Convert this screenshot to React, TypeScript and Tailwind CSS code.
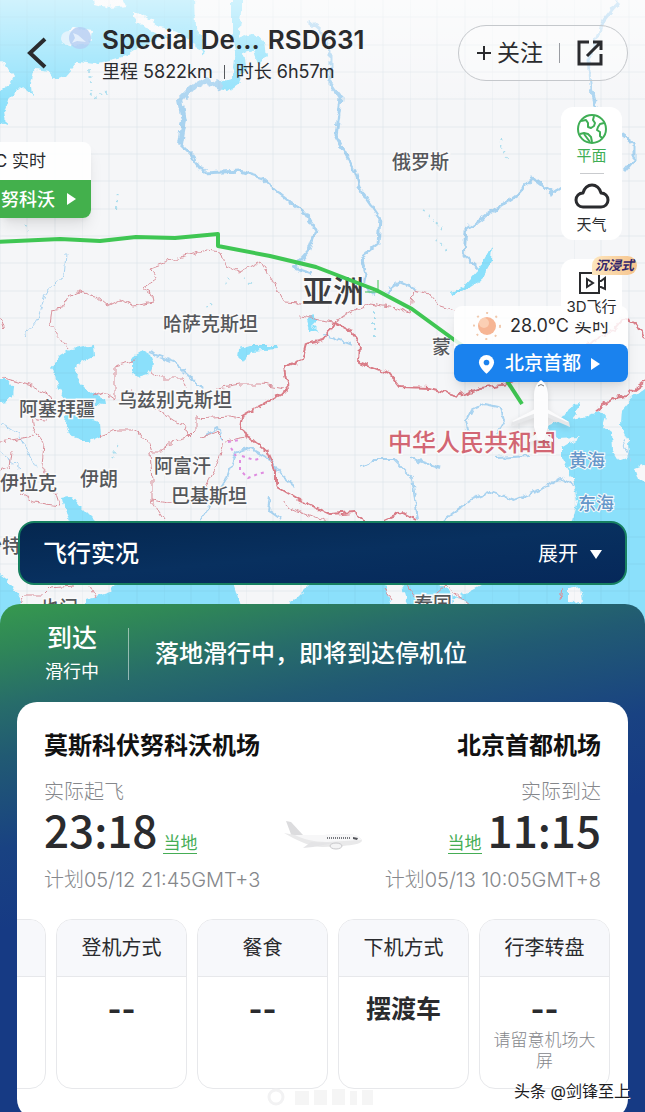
import { useState } from 'react'
import type { ReactNode } from 'react'

interface Airport {
  name: string
  kind: string
  time: string
  plan: string
}

interface ServiceCell {
  title: string
  value: string
  note?: string
}

const DEPARTURE: Airport = {
  name: '莫斯科伏努科沃机场',
  kind: '实际起飞',
  time: '23:18',
  plan: '计划05/12 21:45GMT+3',
}

const ARRIVAL: Airport = {
  name: '北京首都机场',
  kind: '实际到达',
  time: '11:15',
  plan: '计划05/13 10:05GMT+8',
}

const SERVICES: ServiceCell[] = [
  { title: '', value: '' },
  { title: '登机方式', value: '--' },
  { title: '餐食', value: '--' },
  { title: '下机方式', value: '摆渡车' },
  { title: '行李转盘', value: '--', note: '请留意机场大屏' },
]

const COUNTRIES = [
  { name: '俄罗斯', x: 392, y: 169 },
  { name: '哈萨克斯坦', x: 163, y: 331 },
  { name: '阿塞拜疆', x: 19, y: 416 },
  { name: '乌兹别克斯坦', x: 118, y: 407 },
  { name: '阿富汗', x: 154, y: 473 },
  { name: '巴基斯坦', x: 171, y: 503 },
  { name: '伊朗', x: 80, y: 486 },
  { name: '伊拉克', x: 0, y: 490 },
  { name: '沙特', x: -17, y: 553 },
  { name: '也门', x: 40, y: 615 },
  { name: '泰国', x: 414, y: 611 },
  { name: '蒙', x: 432, y: 354 },
]

function WorldMap() {
  return (
    <svg
      viewBox="0 0 645 640"
      preserveAspectRatio="xMidYMin slice"
      className="absolute inset-x-0 top-0 h-[640px] w-full"
      aria-hidden="true"
    >
      <defs>
        <filter id="rough" x="-5%" y="-5%" width="110%" height="110%" colorInterpolationFilters="sRGB">
          <feTurbulence type="fractalNoise" baseFrequency="0.14" numOctaves="2" seed="4" />
          <feDisplacementMap in="SourceGraphic" scale="7" xChannelSelector="R" yChannelSelector="G" />
        </filter>
        <pattern id="grid" width="82" height="82" patternUnits="userSpaceOnUse">
          <path d="M0 0V82M27 0V82M55 0V82M0 17H82M0 45H82M0 72H82" stroke="#5c7f99" strokeOpacity="0.09" fill="none" />
        </pattern>
        <linearGradient id="fade" x1="0" y1="0" x2="0" y2="1">
          <stop offset="0" stopColor="#fff" stopOpacity="0.6" />
          <stop offset="1" stopColor="#fff" stopOpacity="0" />
        </linearGradient>
      </defs>
      <rect width="645" height="640" fill="#f5f6f8" />

      {/* seas and lakes */}
      <g fill="#8be0fb" filter="url(#rough)">
        <path d="M-5-5H194L195 28L204 40L203 56L196 44L182 40L162 38L145 44L126 56L95 64L78 62L66 76L56 80L50 72L34 70L31 84L32 94L22 86L8 100L4 112L6 125L-5 120V94L8 86L14 76L8 66L-5 58Z" />
        <path d="M232-5H243L240 22L238 38L252 34L264 42L266 56L258 64L254 50L244 52L246 66L238 84L228 91L214 88L216 84L230 80L234 66L236 50L232 34Z" />
        <path d="M73 349L93 345L94 357L78 364L75 374L84 386L92 393L105 399L106 405L94 404L86 412L92 420L100 423L101 436L88 442L72 437L65 424L66 412L65 398L58 388L55 376L50 368L60 356Z" />
        <path d="M-5 380H8L14 388L13 396L6 402L-5 404Z" />
        <path d="M132 358L143 351L150 355L154 364L148 374L138 377L132 372Z" />
        <path d="M62 498L72 496L80 506L92 518L104 530H74L66 514Z" />
        <path d="M240 349L250 346L277 346L278 349L250 351L243 362L239 358Z" />
        <path d="M492 245L491 262L481 280L466 290L452 295L451 292L464 286L478 270L486 256Z" />
        <path d="M312 315L318 320L312 326L318 332L310 330L307 320Z" />
        <path d="M548 426L560 421L568 409L580 404L576 414L572 419L588 416L600 410L606 417L603 427L611 433L612 450L618 460L629 456L628 440L621 424L622 410L632 398L650 384V645H560L568 540L578 500L573 478L562 458L562 448L580 437L558 438L549 434Z" />
        <path d="M-5 570L8 580L20 598L24 645H-5ZM118 580H232L240 606L250 645H60L86 600L110 592ZM314 580H384L392 606L396 645H288L292 602ZM400 580L406 600L416 645H470L452 600L500 575H570V645H480L468 604L440 585Z" />
      </g>
      <g fill="#f7f7f9" filter="url(#rough)">
        <path d="M92-5L122-2L126 6L110 8L94 4ZM134 12L144 16L160 27L178 31L190 42L180 44L160 34L144 28L134 18ZM64 34L74 28L92 30L90 44L74 46L62 42Z" />
        <path d="M634 468L650 462V484L638 480ZM569 588L580 586L582 602L574 604L569 600Z" />
      </g>

      {/* rivers */}
      <g fill="none" stroke="#a9d3f0" strokeWidth="3" strokeLinejoin="round" filter="url(#rough)">
        <path d="M222 88L206 80L192 88L180 100L184 120L180 144" strokeWidth="6" />
        <path d="M180 144L192 156L204 173L240 171L262 178L280 194L304 212L316 230L308 252L294 268L312 274" />
        <path d="M308 20L320 30L330 50L330 84L341 98L336 136L354 168L362 192L380 218L378 244L361 258L366 274L363 286L376 296M386 292L400 282L416 289" />
        <path d="M618 2L604 20L596 40L588 60L590 84L597 110M620 134L634 144L634 160L624 172M562 186L552 193L532 178L516 196L494 210L466 230L464 256L478 268" />
        <path d="M148 352L174 362L190 376L202 390M205 436L218 428L222 440M200 520L226 480L236 452L250 448L272 460L282 476L294 486" strokeWidth="2" />
        <path d="M470 440L466 422L472 410L484 404L502 408L505 420L494 440M360 468L374 460L394 460L412 478L418 520M410 458L440 468M496 458L530 456M444 520L470 500L490 492L514 500L540 490L560 478L574 484" strokeWidth="2" />
        <path d="M2 424L18 434L36 468M0 452L20 468M66 254L64 276L46 292L38 318L24 336M624 440L630 460" strokeWidth="1" />
        <path d="M324 334L352 344M270 498L268 510L282 520" strokeWidth="2" />
      </g>
      <g stroke="#a8dced" strokeWidth="1" strokeDasharray="2 4" fill="none" filter="url(#rough)">
        <path d="M90 70L92 98L108 92M116 208L118 192M24 225L28 230M500 140L506 158M424 210L444 232M436 240L446 250M374 310V336M112 458L118 444M224 284L230 276M244 278L250 284M206 308L212 304" strokeWidth="2" />
      </g>
      <rect width="645" height="640" fill="url(#grid)" />

      {/* borders */}
      <g fill="none" stroke="#d98f99" strokeWidth="1" filter="url(#rough)">
        <path d="M68 350L60 338L50 325L52 310L62 308L68 297L80 292L96 296L108 306L120 300L134 306L154 302L153 295L143 288L156 278L150 268L178 258L206 250L220 252L224 264L240 272L260 262L272 280L284 302L302 303" />
        <path d="M115 400V366L136 360M150 370L160 378L182 378L186 388M115 400L104 392L94 396M130 390L150 404L164 414L188 430L190 436L174 440L160 452L152 452L148 440L132 430L116 430L100 436M188 438L196 430L196 418L230 416L240 418M200 438L216 432L224 440L246 436M216 388L240 384L262 384L284 388M224 442L216 468L204 490M150 452L152 480L152 502L164 520M152 500L172 504" />
        <path d="M4 378L32 386L50 396L56 410L44 420L32 418L34 430L44 444L42 466L56 494L60 506L34 502L20 494M0 442L34 436M12 452L10 466L0 470M0 318L4 330" />
        <path d="M335 322L350 312L370 304L396 308L410 313L414 290L430 294L440 306L456 311M300 316L320 320L335 322M284 500L290 508L314 518L330 522" />
        <path d="M20 602L24 596L42 596L50 588L74 586M90 586L96 598M384 588L392 600M408 585L414 598M430 600L446 586L464 600L478 612M560 600L562 588" />
      </g>
      <g fill="none" stroke="#d97c87" strokeWidth="2" strokeLinejoin="round" filter="url(#rough)">
        <path d="M335 322L324 340L306 344L302 360L284 367L288 390L270 400L242 416L240 430L250 438L268 452L276 470L276 486L296 498L330 514L354 512L366 522M384 520L402 512L416 520M335 322L350 330L360 344L359 362L390 374L400 387L430 388L458 396L480 388L508 384L560 360L614 330L624 318L636 324L645 338M650 378L626 396L614 398L596 411" />
      </g>
      <path d="M228 442L240 440M231 448L236 456M240 460L240 470L248 478L258 474L266 472M242 456L254 460L262 458" fill="none" stroke="#df8ce0" strokeWidth="2" strokeDasharray="3 4" />

      {/* map labels */}
      <g
        className="font-['Noto_Sans_CJK_SC',sans-serif] text-[19px] font-medium"
        fill="#55575b"
        stroke="#fafafa"
        strokeWidth="3"
        paintOrder="stroke"
      >
        {COUNTRIES.map(c => (
          <text key={c.name} x={c.x} y={c.y}>{c.name}</text>
        ))}
        <text x="302" y="302" className="text-[31px]" fill="#3b3c3f">亚洲</text>
        <text x="388" y="451" className="text-[24px]" fill="#d26673">中华人民共和国</text>
        <g className="text-[18px]" fill="#6597ca" strokeWidth="2">
          <text x="569" y="467">黄海</text>
          <text x="578" y="510">东海</text>
        </g>
      </g>

      {/* flight track */}
      <path
        d="M-4 242L60 239L100 241L136 237L175 238L218 234V246L270 256L316 267L376 290L412 309L460 344L500 370L522 404"
        fill="none"
        stroke="#3fc653"
        strokeWidth="4"
        strokeLinejoin="round"
      />
      <path d="M378 280V292M365 292H380" stroke="#3fc653" strokeWidth="1" />
      <rect width="645" height="110" fill="url(#fade)" />
    </svg>
  )
}

function PlaneMarker() {
  return (
    <svg viewBox="0 0 64 66" className="absolute top-[379px] right-[72px] w-16 drop-shadow-md" aria-hidden="true">
      <path d="M26 30L3 42L2 47L27 38ZM38 30L60 43L61 48L38 38Z" fill="#e6e7e9" />
      <path d="M26 30L3 42L4 43L27 34ZM38 30L60 43L58 43L38 34Z" fill="#fbfbfc" />
      <path d="M28 54L20 60V63L32 60L44 63V60L36 54Z" fill="#f7f7f8" />
      <path d="M32 1C35 3 39 8 39 16V48L35 61H29L25 48V16C25 8 29 3 32 1Z" fill="#fcfcfd" />
      <path d="M29 7Q32 4 35 7" fill="none" stroke="#777" strokeWidth="1" />
    </svg>
  )
}

function PinCards() {
  return (
    <>
      <div className="absolute top-[142px] left-0 w-[91px] overflow-hidden rounded-r-lg bg-white/90 text-[17px] shadow-lg">
        <p className="flex h-[38px] items-center justify-end pt-[2px] pr-[45px] whitespace-nowrap">℃ 实时</p>
        <button className="flex h-[38px] w-full items-center justify-end gap-3 bg-[#43b04c] pr-[15px] text-[18px] font-medium whitespace-nowrap text-white">
          努科沃
          <Triangle className="w-[9px]" />
        </button>
      </div>

      <div className="absolute top-[306px] right-[17px] w-[174px] rounded-lg bg-white/85 shadow-lg">
        <p className="flex h-[38px] items-center gap-2 pt-px pl-[18px] text-[18px] whitespace-nowrap">
          <svg viewBox="0 0 30 30" className="w-[30px]" aria-hidden="true">
            <circle cx="15" cy="15" r="13" fill="none" stroke="#f0c9ae" strokeWidth="2" strokeDasharray="2 8" />
            <circle cx="15" cy="15" r="9" fill="#f6b594" />
            <circle cx="12" cy="12" r="5" fill="#fbcfb4" />
          </svg>
          28.0℃ 实时
        </p>
        <button className="flex h-[38px] w-full items-center justify-center gap-[10px] rounded-lg bg-[#1a82ee] pt-[2px] pr-1 text-[19px] font-medium text-white">
          <svg viewBox="0 0 18 22" className="w-[17px]" aria-hidden="true">
            <path d="M9 1A8 8 0 0 0 1 9C1 14 9 21 9 21S17 14 17 9A8 8 0 0 0 9 1Z" fill="#fff" />
            <circle cx="9" cy="9" r="3" fill="#1a82ee" />
          </svg>
          北京首都
          <Triangle className="w-[9px]" />
        </button>
      </div>
    </>
  )
}

function Triangle({ className }: { className: string }) {
  return (
    <svg viewBox="0 0 9 12" className={className} aria-hidden="true">
      <path d="M0 0L9 6L0 12Z" fill="currentColor" />
    </svg>
  )
}

function Header() {
  return (
    <header className="relative flex items-start pt-[25px] pr-[17px] pl-[26px]">
      <button aria-label="返回" className="mt-3 shrink-0">
        <svg viewBox="0 0 22 32" className="h-8 w-[22px]" fill="none" stroke="#2a2b2e" strokeWidth="4">
          <path d="M19 2L4 16L19 30" />
        </svg>
      </button>
      <svg viewBox="0 0 32 26" className="ml-3 w-8 shrink-0" aria-hidden="true">
        <ellipse cx="9" cy="13" rx="8" ry="7" fill="#e3f3fc" />
        <circle cx="20" cy="13" r="11" fill="#b4cdf2" opacity="0.8" />
        <path d="M13 8L18 10L26 17L17 16L12 18L15 13Z" fill="#e4effc" />
      </svg>
      <div className="ml-[10px] min-w-0 flex-1 whitespace-nowrap">
        <h1 className="flex gap-2 text-[26px] leading-[30px] font-semibold">
          <span>Special De...</span>
          <span>RSD631</span>
        </h1>
        <p className="mt-[2px] flex items-center gap-[11px] text-[18px] leading-[30px]">
          里程 5822km
          <span className="h-[14px] w-px bg-[#55585c]" />
          时长 6h57m
        </p>
      </div>
      <div className="flex h-14 shrink-0 items-center rounded-full border border-[#c5c8cc] bg-white/30 pr-[23px] pl-[18px]">
        <button className="flex items-center gap-[6px] text-[23px]">
          <svg viewBox="0 0 14 14" className="w-[14px]" stroke="#2a2b2e" strokeWidth="2">
            <path d="M7 0V14M0 7H14" />
          </svg>
          关注
        </button>
        <span className="mx-4 h-5 w-px bg-[#9a9da2]" />
        <button aria-label="分享">
          <svg viewBox="0 0 28 28" className="w-7" fill="none" stroke="#2a2b2e" strokeWidth="3">
            <path d="M13 3H3V25H25V15M17 3H25V11M25 3L11 17" />
          </svg>
        </button>
      </div>
    </header>
  )
}

function Tool({ label, children, active = false }: { label: string; children: ReactNode; active?: boolean }) {
  return (
    <button className={`flex w-full flex-col items-center text-[15px] leading-[22px] ${active ? 'text-[#3fae55]' : ''}`}>
      {children}
      {label}
    </button>
  )
}

function MapTools() {
  return (
    <nav className="relative mt-5 mr-[23px] flex w-[61px] flex-col gap-[19px] self-end">
      <div className="rounded-xl bg-white pt-[7px] pb-1">
        <Tool label="平面" active>
          <svg viewBox="0 0 30 30" className="mb-px w-[30px]" fill="none" stroke="currentColor" strokeWidth="2" strokeLinejoin="round">
            <circle cx="15" cy="15" r="14" />
            <path d="M4 7L9 6L11 9L11 13L14 14L17 12L18 9L16 6L17 2M3 20L7 19L11 20L14 23L15 28M27 9L23 10L21 13L20 16L23 18L23 22L25 24" />
            <path d="M7 20L13 28" />
          </svg>
        </Tool>
        <div className="mx-auto mt-[6px] mb-[8px] h-px w-6 bg-[#c9cbce]" />
        <Tool label="天气">
          <svg viewBox="0 0 36 28" className="mb-1 w-9" fill="none" stroke="#2a2b2e" strokeWidth="3" strokeLinejoin="round">
            <path d="M9 25C5 25 2 22 2 18S5 11 9 11C10 6 14 3 18 3S26 6 27 11C31 11 34 14 34 18S31 25 27 25Z" />
          </svg>
        </Tool>
      </div>
      <div className="relative rounded-xl bg-white pt-[11px] pb-1">
        <Tool label="3D飞行">
          <svg viewBox="0 0 30 26" className="w-[30px]" fill="none" stroke="#2a2b2e" strokeWidth="2">
            <path d="M3 3H22V23H3ZM22 11L24 11L28 8V19L24 17H22" />
            <path d="M10 9L16 13L10 17Z" />
          </svg>
        </Tool>
        <span className="absolute -top-[3px] -right-[15px] rounded-full rounded-bl-sm bg-linear-to-r from-[#fde6bd] to-[#f6c48d] px-[3px] text-[13px] leading-[19px] font-bold whitespace-nowrap text-[#33266b] italic">
          沉浸式
        </span>
      </div>
    </nav>
  )
}

function AirportColumn({ airport, end = false }: { airport: Airport; end?: boolean }) {
  return (
    <div className={`flex flex-col whitespace-nowrap ${end ? 'items-end' : 'items-start'}`}>
      <h2 className="text-[24px] leading-8 font-bold text-[#111]">{airport.name}</h2>
      <p className="mt-4 text-[20px] leading-7 font-light text-[#85878b]">{airport.kind}</p>
      <div className={`mt-1 flex h-[50px] items-start gap-[6px] ${end ? 'flex-row-reverse' : ''}`}>
        <time className="font-['Noto_Sans_CJK_SC',sans-serif] text-[44px] leading-[38px] font-medium">{airport.time}</time>
        <button className="mt-[23px] border-b border-[#45ad55] text-[17px] leading-5 text-[#45ad55]">当地</button>
      </div>
      <p className="mt-[6px] text-[20px] leading-7 font-light text-[#85878b]">{airport.plan}</p>
    </div>
  )
}

function Airliner() {
  return (
    <svg viewBox="0 0 80 30" className="absolute top-[118px] left-1/2 w-20 -translate-x-[40px]" aria-hidden="true">
      <path d="M3 1L8 2L20 15L9 17Z" fill="#dcdcde" />
      <path d="M1 13L12 15L40 15L66 14C74 15 79 18 79 21C77 24 70 25 60 26L40 27C28 27 18 22 10 18Z" fill="#e9e9ea" />
      <path d="M12 15L40 15L66 14C74 15 79 18 78 20L44 22C30 22 20 19 12 15Z" fill="#f7f7f8" />
      <path d="M44 18H68" stroke="#77797e" strokeWidth="2" strokeDasharray="1 1" />
      <path d="M70 17L75 18L74 20L70 19Z" fill="#55575c" />
      <path d="M28 22L50 23L30 27L20 28Z" fill="#e4e4e6" />
      <ellipse cx="53" cy="26" rx="6" ry="3" fill="#f4f4f5" stroke="#c9c9cc" />
    </svg>
  )
}

export default function App() {
  const [expanded, setExpanded] = useState(false)

  return (
    <main className="relative flex h-screen flex-col overflow-hidden font-[Inter,'Noto_Sans_CJK_SC',sans-serif] text-[#2a2b2e]">
      <WorldMap />

      <section className="relative flex h-[604px] shrink-0 flex-col">
        <PinCards />
        <PlaneMarker />
        <Header />
        <MapTools />
        <button
          aria-expanded={expanded}
          onClick={() => setExpanded(!expanded)}
          className="relative mx-[18px] mt-auto mb-[19px] flex h-16 items-center rounded-2xl border-2 border-[#178060] bg-linear-to-br from-[#05274f] via-[#08305f] to-[#06285a] px-[23px] pt-[2px] text-white"
        >
          <span className="text-[24px] font-medium">飞行实况</span>
          <span className="ml-auto text-[20px]">展开</span>
          <svg viewBox="0 0 12 9" className="ml-3 w-3" aria-hidden="true">
            <path d="M0 0H12L6 9Z" fill="#fff" />
          </svg>
        </button>
      </section>

      <section className="relative shrink-0 rounded-t-[20px] bg-[linear-gradient(168deg,#36994e_0px,#2f8658_45px,#276c6a_100px,#215a73_150px,#194282_240px,#163a84_320px)] px-[17px] pb-6">
        <div className="flex h-[98px] items-center pt-[2px] pl-[27px] text-white">
          <div className="flex w-[56px] flex-col items-center whitespace-nowrap">
            <strong className="text-[25px] leading-8 font-medium">到达</strong>
            <span className="mt-1 text-[18px] leading-7">滑行中</span>
          </div>
          <span className="ml-7 h-[52px] w-px bg-white/50" />
          <p className="ml-[26px] text-[24px] font-medium">落地滑行中，即将到达停机位</p>
        </div>

        <div className="relative overflow-hidden rounded-[20px] bg-white pb-[30px]">
          <div className="flex justify-between px-[27px] pt-7">
            <AirportColumn airport={DEPARTURE} />
            <AirportColumn airport={ARRIVAL} end />
          </div>
          <Airliner />

          <ul className="mt-[25px] flex justify-end gap-[10px] pr-[18px]">
            {SERVICES.map((s, i) => (
              <li key={i} className="h-[170px] w-[131px] shrink-0 overflow-hidden rounded-2xl border border-[#e7e8eb] text-center">
                <h3 className="h-[57px] border-b border-[#e7e8eb] bg-[#f7f8fb] text-[20px] leading-[56px]">{s.title}</h3>
                <p className={`mt-[14px] leading-9 font-bold ${s.value === '--' ? 'text-[30px]' : 'text-[25px]'}`}>{s.value}</p>
                {s.note && <p className="mt-[3px] px-[13px] text-[17px] leading-[21px] font-light text-[#85878b]">{s.note}</p>}
              </li>
            ))}
          </ul>

          <svg viewBox="0 0 112 22" className="absolute top-[384px] left-[248px] w-28" fill="#f2f2f3" aria-hidden="true">
            <circle cx="11" cy="11" r="7" fill="none" stroke="#f2f2f3" strokeWidth="3" />
            <path d="M30 5H44V19H30ZM49 4H62V19H49ZM67 3H80V19H67ZM85 5H92V19H85ZM97 4H108V19H97Z" opacity="0.8" />
          </svg>
        </div>
      </section>

      <p className="absolute right-[15px] bottom-[9px] text-[16px] leading-6 text-[#1d1d1f] [text-shadow:1px_1px_0_#fff,-1px_-1px_0_#fff]">
        头条 @剑锋至上
      </p>
    </main>
  )
}
